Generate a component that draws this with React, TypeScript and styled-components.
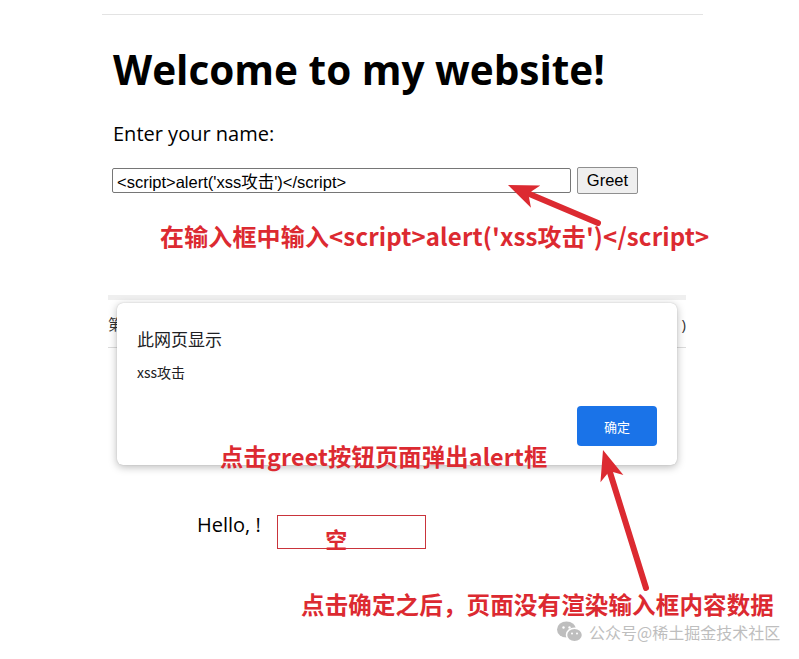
import styled, { createGlobalStyle } from 'styled-components';

const GlobalStyle = createGlobalStyle`
    html, body {
        margin: 0;
        padding: 0;
        background: #ffffff;
    }
`;

const RED = '#dc2a31';

const Screen = styled.div`
    width: 799px;
    height: 659px;
    position: relative;
    overflow: hidden;
    background: #ffffff;
    font-family: 'Open Sans', 'Noto Sans', 'Noto Sans CJK SC', sans-serif;
    color: #000;
`;

const Page = styled.div`
    display: flex;
    flex-direction: column;
    padding-top: 14px;
`;

const TopRule = styled.div`
    margin-left: 102px;
    width: 601px;
    height: 1px;
    background: #e3e3e3;
`;

const Heading = styled.h1`
    margin: 30px 0 0 113px;
    font-family: 'Open Sans', sans-serif;
    font-weight: 700;
    font-size: 40.5px;
    line-height: 50px;
    letter-spacing: 0;
`;

const Label = styled.div`
    margin: 26px 0 0 113px;
    font-size: 20px;
    line-height: 26px;
`;

const FormRow = styled.div`
    display: flex;
    align-items: center;
    gap: 6px;
    margin: 20px 0 0 112px;
`;

const NameInput = styled.div`
    box-sizing: border-box;
    width: 459px;
    height: 25px;
    border: 1px solid #767676;
    border-radius: 2px;
    padding: 0 4px;
    display: flex;
    align-items: center;
    font-family: 'Liberation Sans', 'Noto Sans CJK SC', sans-serif;
    font-size: 16.5px;
    color: #000;
    white-space: nowrap;
`;

const GreetButton = styled.div`
    box-sizing: border-box;
    width: 61px;
    height: 27px;
    border: 1px solid #8f8f8f;
    border-radius: 2px;
    background: #efefef;
    display: flex;
    align-items: center;
    justify-content: center;
    font-family: 'Liberation Sans', sans-serif;
    font-size: 16.5px;
    color: #000;
`;

const Note = styled.div<{ $left: number; $top: number; $size: number }>`
    margin: ${({ $top }) => $top}px 0 0 ${({ $left }) => $left}px;
    font-family: 'Noto Sans CJK SC', 'Noto Sans', sans-serif;
    font-weight: 700;
    font-size: ${({ $size }) => $size}px;
    line-height: ${({ $size }) => $size + 4}px;
    letter-spacing: 0.15px;
    color: ${RED};
    white-space: nowrap;
    position: relative;
    z-index: 2;
`;

const BackStrip = styled.div`
    margin: 45px 0 0 108px;
    width: 578px;
    display: flex;
    flex-direction: column;
`;

const StripBar = styled.div`
    height: 5px;
    background: #efefef;
`;

const StripRow = styled.div`
    height: 47px;
    border-bottom: 1px solid #dcdcdc;
    display: flex;
    justify-content: space-between;
    align-items: center;
    font-size: 15px;
    color: #333;
    overflow: hidden;
`;

const HelloRow = styled.div`
    display: flex;
    align-items: flex-start;
    gap: 16px;
    margin: 44px 0 0 197px;
`;

const HelloText = styled.div`
    font-size: 20px;
    line-height: 22px;
`;

const EmptyBox = styled.div`
    box-sizing: border-box;
    width: 149px;
    height: 34px;
    margin-top: 1px;
    border: 1px solid #c9343b;
    display: flex;
    align-items: flex-end;
    justify-content: center;
    padding-right: 30px;
    font-family: 'Noto Sans CJK SC', sans-serif;
    font-weight: 700;
    font-size: 22px;
    line-height: 19px;
    color: ${RED};
`;

const Dialog = styled.div`
    position: absolute;
    left: 117px;
    top: 303px;
    width: 560px;
    height: 162px;
    box-sizing: border-box;
    background: #fff;
    border-radius: 6px;
    box-shadow: 0 2px 8px rgba(0, 0, 0, 0.28), 0 0 1px rgba(0, 0, 0, 0.25);
    padding: 24px 20px 19px 20px;
    display: flex;
    flex-direction: column;
    font-family: 'Noto Sans CJK SC', 'Noto Sans', sans-serif;
    z-index: 1;
`;

const DialogTitle = styled.div`
    font-size: 17px;
    line-height: 24px;
    color: #202124;
`;

const DialogMessage = styled.div`
    margin-top: 11px;
    font-size: 14px;
    line-height: 20px;
    color: #202124;
`;

const DialogActions = styled.div`
    margin-top: auto;
    display: flex;
    justify-content: flex-end;
`;

const OkButton = styled.div`
    width: 80px;
    height: 40px;
    border-radius: 4px;
    background: #1a73e8;
    color: #fff;
    font-size: 13px;
    display: flex;
    align-items: center;
    justify-content: center;
`;

const Arrows = styled.svg`
    position: absolute;
    left: 0;
    top: 0;
    z-index: 3;
    pointer-events: none;
`;

const Watermark = styled.div`
    position: absolute;
    left: 556px;
    top: 620px;
    display: flex;
    align-items: center;
    gap: 5px;
    opacity: 0.55;
    font-family: 'Noto Sans CJK SC', sans-serif;
    font-size: 16px;
    line-height: 22px;
    color: #8a8a8a;
    white-space: nowrap;
    z-index: 4;
`;

function Arrow({ tail, tip }: { tail: [number, number]; tip: [number, number] }) {
    const dx = tip[0] - tail[0];
    const dy = tip[1] - tail[1];
    const len = Math.hypot(dx, dy);
    const ux = dx / len;
    const uy = dy / len;
    const nx = -uy;
    const ny = ux;
    const headLen = 30;
    const half = 12;
    const bx = tip[0] - ux * headLen;
    const by = tip[1] - uy * headLen;
    const neckX = tip[0] - ux * (headLen - 8);
    const neckY = tip[1] - uy * (headLen - 8);
    return (
        <g fill={RED} stroke={RED}>
            <line x1={tail[0]} y1={tail[1]} x2={neckX} y2={neckY} strokeWidth={6} strokeLinecap="round" />
            <polygon
                stroke="none"
                points={`${tip[0]},${tip[1]} ${bx + nx * half},${by + ny * half} ${neckX},${neckY} ${bx - nx * half},${by - ny * half}`}
            />
        </g>
    );
}

function WeChatIcon() {
    return (
        <svg width="28" height="24" viewBox="0 0 28 24">
            <ellipse cx="10.5" cy="9.5" rx="9.5" ry="8" fill="#8a8a8a" />
            <ellipse cx="18.5" cy="15" rx="8" ry="6.8" fill="#8a8a8a" stroke="#fff" strokeWidth="1.5" />
            <circle cx="7.5" cy="7.5" r="1.2" fill="#fff" />
            <circle cx="13.5" cy="7.5" r="1.2" fill="#fff" />
            <circle cx="16" cy="13.5" r="1" fill="#fff" />
            <circle cx="21" cy="13.5" r="1" fill="#fff" />
        </svg>
    );
}

export default function App() {
    return (
        <Screen>
            <GlobalStyle />
            <Page>
                <TopRule />
                <Heading>Welcome to my website!</Heading>
                <Label>Enter your name:</Label>
                <FormRow>
                    <NameInput>&lt;script&gt;alert('xss攻击')&lt;/script&gt;</NameInput>
                    <GreetButton>Greet</GreetButton>
                </FormRow>
                <Note $left={160} $top={28} $size={24}>
                    在输入框中输入&lt;script&gt;alert('xss攻击')&lt;/script&gt;
                </Note>
                <BackStrip>
                    <StripBar />
                    <StripRow>
                        <span>第</span>
                        <span>)</span>
                    </StripRow>
                </BackStrip>
                <Note $left={220} $top={95} $size={23.3}>
                    点击greet按钮页面弹出alert框
                </Note>
                <HelloRow>
                    <HelloText>Hello, !</HelloText>
                    <EmptyBox>空</EmptyBox>
                </HelloRow>
                <Note $left={301} $top={42} $size={23.5}>
                    点击确定之后，页面没有渲染输入框内容数据
                </Note>
            </Page>

            <Dialog>
                <DialogTitle>此网页显示</DialogTitle>
                <DialogMessage>xss攻击</DialogMessage>
                <DialogActions>
                    <OkButton>确定</OkButton>
                </DialogActions>
            </Dialog>

            <Arrows width="799" height="659" viewBox="0 0 799 659">
                <Arrow tail={[598, 223]} tip={[508, 185]} />
                <Arrow tail={[646, 588]} tip={[603, 450]} />
            </Arrows>

            <Watermark>
                <WeChatIcon />
                <span>公众号@稀土掘金技术社区</span>
            </Watermark>
        </Screen>
    );
}
